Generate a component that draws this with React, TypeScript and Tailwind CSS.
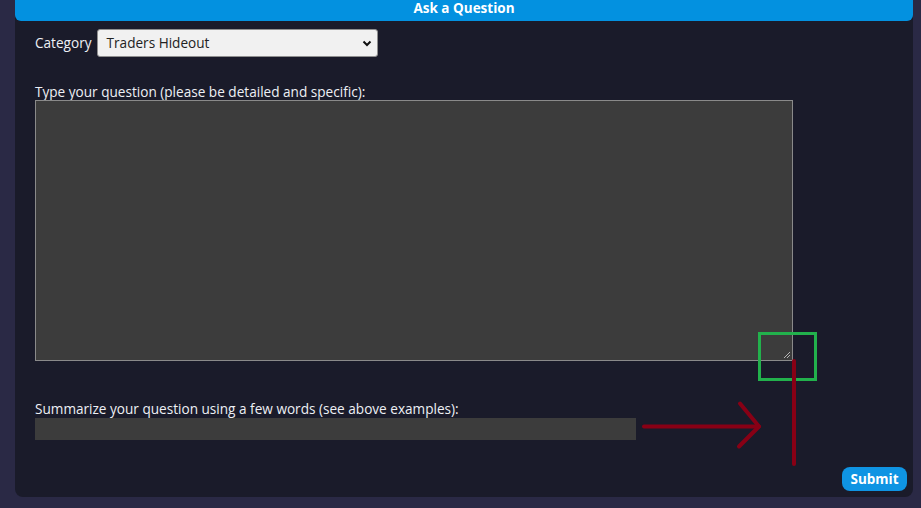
import React from "react";

const font = { fontFamily: '"Open Sans", "Noto Sans", Arial, sans-serif' };

export default function App() {
  return (
    <div className="relative min-h-[508px] w-[921px] bg-[#2a2945] overflow-hidden" style={font}>
      <div className="ml-[15px] w-[898px] h-[497px] bg-[#1a1b2a] rounded-b-lg flex flex-col">
        <div className="h-[21px] bg-[#0391e0] rounded-b-[6px] flex justify-center">
          <span className="text-white text-[13.5px] font-bold leading-[16px]">Ask a Question</span>
        </div>
        <div className="pl-5 pt-2 flex-1 flex flex-col">
          <div className="flex items-center gap-[5px] h-[28px]">
            <span className="text-[#eef0f5] text-[13.6px]">Category</span>
            <div className="relative w-[281px] h-[28px] bg-[#f1f1f1] border border-[#8f8f8f] rounded-[3px] flex items-center pl-[9px]">
              <span className="text-[#222] text-[13.6px]">Traders Hideout</span>
              <svg className="absolute right-[5px] top-[10px]" width="10" height="7" viewBox="0 0 10 7">
                <path d="M1.5 1.5 L5 5 L8.5 1.5" stroke="#111" strokeWidth="2" fill="none" />
              </svg>
            </div>
          </div>
          <div className="mt-[27px] text-[#eef0f5] text-[13.6px] leading-[16px]">
            Type your question (please be detailed and specific):
          </div>
          <div className="relative w-[758px] h-[261px] bg-[#3c3c3c] border border-[#8a8a8a]">
            <svg className="absolute right-[1px] bottom-[1px]" width="9" height="9" viewBox="0 0 9 9">
              <path d="M8 2 L2 8 M8 5 L5 8" stroke="#b5b5b5" strokeWidth="1" />
            </svg>
          </div>
          <div className="mt-[40px] text-[#eef0f5] text-[13.6px] leading-[16px]">
            Summarize your question using a few words (see above examples):
          </div>
          <div className="w-[601px] h-[22px] bg-[#3c3c3c] mt-[1px]" />
          <div className="flex-1" />
          <div className="flex justify-end pr-[6px] pb-[6px]">
            <button className="w-[65px] h-[24px] rounded-[8px] bg-[#0f94e3] text-white text-[13.5px] font-bold">
              Submit
            </button>
          </div>
        </div>
      </div>
      <svg className="absolute inset-0 pointer-events-none" width="921" height="508" viewBox="0 0 921 508">
        <rect x="759.5" y="333.5" width="56" height="46" fill="none" stroke="#22b14c" strokeWidth="3" />
        <line x1="794" y1="361" x2="794" y2="464" stroke="#880015" strokeWidth="4" strokeLinecap="round" />
        <line x1="644" y1="426.5" x2="759" y2="426.5" stroke="#880015" strokeWidth="4" strokeLinecap="round" />
        <polyline points="740,403.5 759,426.5 739,446.5" fill="none" stroke="#880015" strokeWidth="4" strokeLinecap="round" strokeLinejoin="round" />
      </svg>
    </div>
  );
}
